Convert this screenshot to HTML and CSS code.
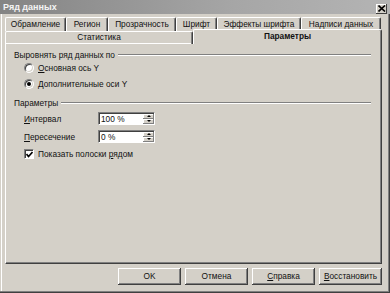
FILE: index.html
```html
<!DOCTYPE html>
<html lang="ru">
<head>
  <meta charset="UTF-8">
  <title>Ряд данных</title>
  <link rel="stylesheet" href="styles.css">
</head>
<body>
  <div class="window">
    <div class="titlebar">
      <span class="title">Ряд данных</span>
      <span class="close">
        <svg width="8" height="7" viewBox="0 0 8 7"><path d="M0.5 0.5 L7 6.5 M7 0.5 L0.5 6.5" stroke="#000" stroke-width="1.6"/></svg>
      </span>
    </div>

    <div class="tabs">
      <div class="tab-row row-top">
        <div class="tab">Обрамление</div>
        <div class="tab">Регион</div>
        <div class="tab">Прозрачность</div>
        <div class="tab">Шрифт</div>
        <div class="tab">Эффекты шрифта</div>
        <div class="tab">Надписи данных</div>
      </div>
      <div class="tab-row row-bottom">
        <div class="tab">Статистика</div>
        <div class="tab active">Параметры</div>
      </div>
    </div>

    <div class="panel">
      <div class="legend first"><span>Выровнять ряд данных по</span></div>
      <div class="option opt-1"><span class="radio"></span><span><u>О</u>сновная ось Y</span></div>
      <div class="option opt-2"><span class="radio checked"></span><span><u>Д</u>ополнительные оси Y</span></div>

      <div class="legend second"><span>Параметры</span></div>
      <div class="field field-1">
        <span class="field-label"><u>И</u>нтервал</span>
        <div class="spin">
          <span class="spin-value">100 %</span>
          <span class="spin-buttons"><span class="spin-up"></span><span class="spin-down"></span></span>
        </div>
      </div>
      <div class="field field-2">
        <span class="field-label"><u>П</u>ересечение</span>
        <div class="spin">
          <span class="spin-value">0 %</span>
          <span class="spin-buttons"><span class="spin-up"></span><span class="spin-down"></span></span>
        </div>
      </div>
      <div class="option check-row">
        <span class="checkbox">
          <svg width="7" height="7" viewBox="0 0 7 7"><path d="M0.5 3 L2.5 5.5 L6.5 1" fill="none" stroke="#000" stroke-width="1.6"/></svg>
        </span>
        <span>Показать полоски <u>р</u>ядом</span>
      </div>
    </div>

    <div class="buttons">
      <div class="button">OK</div>
      <div class="button">Отмена</div>
      <div class="button"><u>С</u>правка</div>
      <div class="button"><u>В</u>осстановить</div>
    </div>
  </div>
</body>
</html>
```

FILE: styles.css
```css
body {
  margin: 0;
  font-family: 'Liberation Sans', Arial, sans-serif;
  font-size: 8.3px;
  color: #111;
  background: #d4d0c8;
}

u {
  text-decoration: underline;
  text-underline-offset: 1px;
}

.window {
  position: relative;
  width: 390px;
  height: 293px;
  box-sizing: border-box;
  background: #d4d0c8;
  box-shadow: inset -1px -1px #404040, inset -2px -2px #808080, inset 1px 1px #d4d0c8, inset 2px 2px #fff;
  overflow: hidden;
}

/* title bar */
.titlebar {
  height: 14px;
  display: flex;
  align-items: center;
  justify-content: space-between;
  padding: 0 3px 0 3px;
  background: linear-gradient(to right, #848484, #a6a6a6 60%, #b4b4b4);
}

.title {
  color: #f4f4f4;
  font-weight: bold;
  font-size: 9px;
}

.close {
  width: 11px;
  height: 10px;
  margin-top: 3px;
  background: #d4d0c8;
  box-shadow: inset -1px -1px #404040, inset 1px 1px #fff;
  display: flex;
  align-items: center;
  justify-content: center;
}

/* tabs */
.tabs {
  margin-top: 3px;
  padding-left: 5px;
}

.tab-row {
  display: grid;
}

.row-top {
  height: 14px;
  grid-template-columns: 61px 42px 68px 41px 84px 80px;
}

.row-bottom {
  height: 12px;
  width: 377px;
  grid-template-columns: 188px 189px;
}

.tab {
  box-sizing: border-box;
  border-top: 1px solid #fff;
  border-left: 1px solid #fff;
  border-right: 1px solid #404040;
  box-shadow: inset -1px 0 #808080;
  border-radius: 2px 2px 0 0;
  text-align: center;
  line-height: 13px;
  white-space: nowrap;
}

.row-bottom .tab {
  line-height: 11px;
}

.tab.active {
  position: relative;
  z-index: 1;
  margin-top: -2px;
  height: 15px;
  font-weight: bold;
  background: #d4d0c8;
  line-height: 13px;
}

/* panel */
.panel {
  margin-left: 5px;
  width: 377px;
  height: 221px;
  box-sizing: border-box;
  border-top: 1px solid #fff;
  border-left: 1px solid #fff;
  border-right: 1px solid #404040;
  border-bottom: 1px solid #404040;
  box-shadow: inset -1px -1px #808080;
  padding: 5px 10px 0 8px;
}

.legend {
  display: flex;
  align-items: center;
  gap: 3px;
  height: 12px;
}

.legend::after {
  content: "";
  flex: 1;
  height: 0;
  border-top: 1px solid #808080;
  border-bottom: 1px solid #fff;
}

.legend.second {
  margin-top: 7px;
}

.option {
  display: flex;
  align-items: center;
  gap: 4px;
  height: 12px;
  padding-left: 10px;
}

.opt-1 {
  margin-top: 1px;
}

.opt-2 {
  margin-top: 4px;
}

.radio {
  width: 10px;
  height: 10px;
  box-sizing: border-box;
  border-radius: 50%;
  background: #fff;
  border: 1px solid;
  border-color: #808080 #fff #fff #808080;
  box-shadow: inset 1px 1px #404040, inset -1px -1px #d4d0c8;
  display: flex;
  align-items: center;
  justify-content: center;
}

.radio.checked::after {
  content: "";
  width: 4px;
  height: 4px;
  border-radius: 50%;
  background: #000;
}

.checkbox {
  width: 10px;
  height: 10px;
  box-sizing: border-box;
  background: #fff;
  border: 1px solid;
  border-color: #808080 #fff #fff #808080;
  box-shadow: inset 1px 1px #404040;
  display: flex;
  align-items: center;
  justify-content: center;
}

.check-row {
  margin-top: 5px;
}

.field {
  display: flex;
  align-items: center;
  height: 13px;
  padding-left: 10px;
}

.field-1 {
  margin-top: 3px;
}

.field-2 {
  margin-top: 5px;
}

.field-label {
  width: 74px;
}

.spin {
  width: 57px;
  height: 13px;
  box-sizing: border-box;
  background: #fff;
  border: 1px solid;
  border-color: #808080 #fff #fff #808080;
  box-shadow: inset 1px 1px #404040;
  display: flex;
  align-items: center;
  justify-content: space-between;
  padding: 1px 0 0 2px;
}

.spin-value {
  line-height: 10px;
}

.spin-buttons {
  display: flex;
  flex-direction: column;
  width: 11px;
  height: 10px;
  margin-top: -1px;
}

.spin-up,
.spin-down {
  flex: 1;
  background: #d4d0c8;
  box-shadow: inset -1px -1px #808080, inset 1px 1px #fff;
  display: flex;
  align-items: center;
  justify-content: center;
}

.spin-up::after {
  content: "";
  border-left: 2px solid transparent;
  border-right: 2px solid transparent;
  border-bottom: 2px solid #000;
}

.spin-down::after {
  content: "";
  border-left: 2px solid transparent;
  border-right: 2px solid transparent;
  border-top: 2px solid #000;
}

/* bottom buttons */
.buttons {
  display: flex;
  justify-content: flex-end;
  gap: 4px;
  margin-top: 4px;
  padding-right: 8px;
}

.button {
  width: 63px;
  height: 17px;
  box-sizing: border-box;
  background: #d4d0c8;
  box-shadow: inset -1px -1px #404040, inset 1px 1px #fff, inset -2px -2px #808080;
  text-align: center;
  line-height: 16px;
}
```
